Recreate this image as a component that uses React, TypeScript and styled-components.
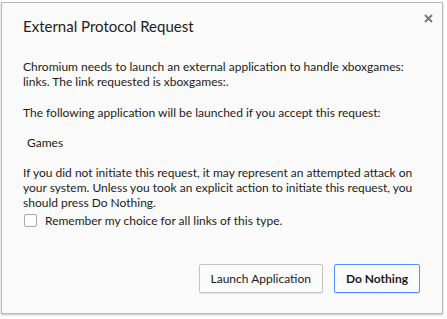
import React from "react";
import styled, { createGlobalStyle } from "styled-components";

const Global = createGlobalStyle`
  html, body { margin: 0; padding: 0; background: #ffffff; }
  body { font-family: "Lato", "Liberation Sans", sans-serif; }
`;

const Page = styled.div`
  width: 447px;
  height: 319px;
  box-sizing: border-box;
  padding: 2px 4px 5px 1px;
`;

const Dialog = styled.div`
  box-sizing: border-box;
  width: 442px;
  height: 312px;
  background: #fafafa;
  border: 1px solid #b9b9b9;
  box-shadow: 0 1px 2px rgba(0, 0, 0, 0.25);
  display: flex;
  flex-direction: column;
  padding: 0 22px 0 21px;
  color: #1c1c1c;
`;

const Header = styled.div`
  display: flex;
  justify-content: space-between;
  align-items: flex-start;
  height: 56px;
  flex: none;
`;

const Title = styled.div`
  font-size: 15px;
  line-height: 18px;
  margin-top: 14px;
  color: #222;
`;

const Close = styled.button`
  border: 0;
  background: none;
  padding: 0;
  margin: 11px -13px 0 0;
  width: 9px;
  height: 9px;
  display: flex;
  cursor: pointer;
`;

const Body = styled.div`
  font-size: 12px;
  line-height: 15px;
`;

const Para = styled.p<{ $gap?: number; $indent?: number }>`
  margin: 0 0 ${(p) => p.$gap ?? 15}px ${(p) => p.$indent ?? 0}px;
`;

const CheckRow = styled.label`
  display: flex;
  align-items: center;
  gap: 8px;
  font-size: 12px;
  line-height: 15px;
  margin-left: 1px;
`;

const Box = styled.span`
  box-sizing: border-box;
  width: 13px;
  height: 13px;
  border: 1px solid #a8a8a8;
  border-radius: 2px;
  background: #fdfdfd;
`;

const Footer = styled.div`
  display: flex;
  justify-content: flex-end;
  gap: 11px;
  margin-top: auto;
  margin-bottom: 20px;
`;

const Btn = styled.button<{ $primary?: boolean }>`
  font-family: "Lato", "Liberation Sans", sans-serif;
  font-size: 12px;
  font-weight: ${(p) => (p.$primary ? 700 : 400)};
  height: 29px;
  padding: 0 11px;
  background: #fbfbfb;
  color: #1a1a1a;
  border: 1px solid ${(p) => (p.$primary ? "#4d90fe" : "#c3c3c3")};
  border-radius: 2px;
  box-shadow: 0 1px 0 rgba(0, 0, 0, 0.08);
`;

export default function App() {
  return (
    <>
      <Global />
      <Page>
        <Dialog>
          <Header>
            <Title>External Protocol Request</Title>
            <Close aria-label="Close">
              <svg width="9" height="9" viewBox="0 0 9 9">
                <path d="M1 1L8 8M8 1L1 8" stroke="#7a7a7a" strokeWidth="2" />
              </svg>
            </Close>
          </Header>
          <Body>
            <Para $gap={16}>
              Chromium needs to launch an external application to handle xboxgames:
              links. The link requested is xboxgames:.
            </Para>
            <Para $gap={15}>The following application will be launched if you accept this request:</Para>
            <Para $indent={4} $gap={15}>Games</Para>
            <Para $gap={3}>
              If you did not initiate this request, it may represent an attempted attack on
              your system. Unless you took an explicit action to initiate this request, you
              should press Do Nothing.
            </Para>
          </Body>
          <CheckRow>
            <Box />
            Remember my choice for all links of this type.
          </CheckRow>
          <Footer>
            <Btn>Launch Application</Btn>
            <Btn $primary>Do Nothing</Btn>
          </Footer>
        </Dialog>
      </Page>
    </>
  );
}
